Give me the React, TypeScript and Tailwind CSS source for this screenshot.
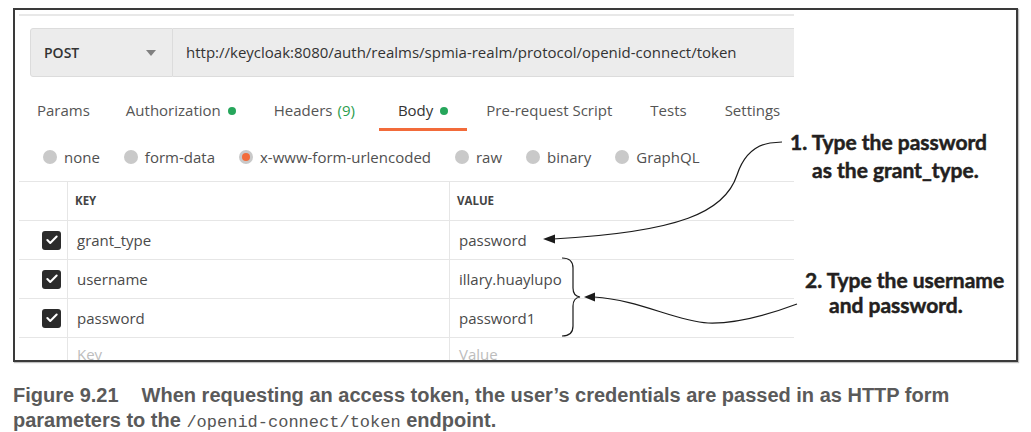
import { Check } from 'lucide-react';

const tabs = [
  { label: 'Params', pad: 'pl-[19px] pr-[17px]' },
  { label: 'Authorization', dot: true, pad: 'px-[19px]' },
  { label: 'Headers', count: '(9)', pad: 'pl-[19px] pr-[24px]' },
  { label: 'Body', dot: true, active: true, pad: 'px-[19px]' },
  { label: 'Pre-request Script', pad: 'px-[19px]' },
  { label: 'Tests', pad: 'px-[19px]' },
  { label: 'Settings', pad: 'px-[19px]' },
];

const bodyTypes = [
  { label: 'none' },
  { label: 'form-data' },
  { label: 'x-www-form-urlencoded', selected: true },
  { label: 'raw' },
  { label: 'binary' },
  { label: 'GraphQL' },
];

const params = [
  { key: 'grant_type', value: 'password' },
  { key: 'username', value: 'illary.huaylupo' },
  { key: 'password', value: 'password1' },
];

const Arrows = () => (
  <svg
    className="absolute left-0 top-0 pointer-events-none"
    width="1031"
    height="432"
    viewBox="0 0 1031 432"
  >
    <g fill="none" stroke="#1a1a1a" strokeWidth="1.2">
      <path d="M 782 142 L 770 143 C 752 146, 742 160, 737 175 C 725 212, 680 232, 553 239" />
      <path d="M 797 304 C 765 316, 735 324, 708 323 C 675 321, 640 300, 594 297" />
      <path d="M 562 258 Q 573 258 573 268 L 573 288 Q 573 296 580 297 Q 573 298 573 306 L 573 326 Q 573 336 562 336" />
    </g>
    <polygon points="543,239 555,234.5 555,243.5" fill="#1a1a1a" />
    <polygon points="584,297 595,292.5 595,301.5" fill="#1a1a1a" />
  </svg>
);

export default function App() {
  return (
    <div className="relative w-[1031px] h-[432px] bg-white overflow-hidden font-['Open_Sans',sans-serif]">
      <div className="pt-[8px] pl-[13px]">
        <div className="w-[1005px] h-[354px] border-2 border-[#3a3a3a] shadow-[1px_1px_1px_rgba(0,0,0,0.25)] flex overflow-hidden">
          {/* Postman request panel */}
          <div className="w-[779px] shrink-0 h-full overflow-hidden">
            <div className="mt-[4px] ml-[4px] h-[2px] bg-[#e8e8e8]" />

            {/* Method + URL */}
            <div className="mt-[12px] ml-[15px] h-[49px] flex">
              <div className="w-[143px] shrink-0 flex items-center justify-between pl-[13px] pr-[16px] bg-[#ececec] border border-[#dcdcdc] rounded-l-[3px]">
                <span className="text-[14px] font-semibold text-[#333]">POST</span>
                <span className="w-0 h-0 border-l-[5px] border-r-[5px] border-t-[6px] border-l-transparent border-r-transparent border-t-[#808080]" />
              </div>
              <div className="flex-1 flex items-center pl-[13px] bg-[#ececec] border-y border-[#dcdcdc] text-[15px] text-[#333] whitespace-nowrap">
                http://keycloak:8080/auth/realms/spmia-realm/protocol/openid-connect/token
              </div>
            </div>

            {/* Tabs */}
            <div className="mt-[16px] ml-[3px] flex">
              {tabs.map((t) => (
                <div
                  key={t.label}
                  className={`h-[38px] flex items-center border-b-[3px] text-[15px] whitespace-nowrap ${t.pad} ${
                    t.active ? 'border-[#f26b3a] text-[#333]' : 'border-transparent text-[#555]'
                  }`}
                >
                  {t.label}
                  {t.count && <span className="ml-[5px] text-[#2a9d4e]">{t.count}</span>}
                  {t.dot && <span className="ml-[7px] w-[8px] h-[8px] rounded-full bg-[#26a65b]" />}
                </div>
              ))}
            </div>

            {/* Body types */}
            <div className="mt-[9px] ml-[28px] h-[34px] flex items-center gap-[24px]">
              {bodyTypes.map((b) => (
                <div key={b.label} className="flex items-center gap-[7px] text-[15px] text-[#505050] whitespace-nowrap">
                  <span className="w-[14px] h-[14px] rounded-full bg-[#c9c9c9] flex items-center justify-center">
                    {b.selected && <span className="w-[8px] h-[8px] rounded-full bg-[#f26b3a]" />}
                  </span>
                  {b.label}
                </div>
              ))}
            </div>

            {/* Params table */}
            <div className="mt-[7px] ml-[4px] border-t border-[#e6e6e6]">
              <div className="h-[39px] flex border-b border-[#e6e6e6]">
                <div className="w-[49px] shrink-0 border-r border-[#e6e6e6]" />
                <div className="w-[382px] shrink-0 border-r border-[#e6e6e6] flex items-center pl-[7px] text-[11.5px] font-bold text-[#444]">
                  KEY
                </div>
                <div className="flex-1 flex items-center pl-[7px] text-[11.5px] font-bold text-[#444]">VALUE</div>
              </div>
              {params.map((p) => (
                <div key={p.key} className="h-[39px] flex border-b border-[#e6e6e6] text-[15px] text-[#4a4a4a]">
                  <div className="w-[49px] shrink-0 border-r border-[#e6e6e6] flex items-center justify-end pr-[6px]">
                    <span className="w-[19px] h-[19px] rounded-[3px] bg-[#2b2b2b] flex items-center justify-center">
                      <Check size={14} strokeWidth={3.5} color="#ffffff" />
                    </span>
                  </div>
                  <div className="w-[382px] shrink-0 border-r border-[#e6e6e6] flex items-center pl-[9px]">{p.key}</div>
                  <div className="flex-1 flex items-center pl-[9px]">{p.value}</div>
                </div>
              ))}
              <div className="h-[39px] flex text-[15px] leading-[20px] text-[#bdbdbd]">
                <div className="w-[49px] shrink-0 border-r border-[#e6e6e6]" />
                <div className="w-[382px] shrink-0 border-r border-[#e6e6e6] pt-[6px] pl-[9px]">Key</div>
                <div className="flex-1 pt-[6px] pl-[9px]">Value</div>
              </div>
            </div>
          </div>
          <div className="flex-1" />
        </div>
      </div>

      {/* Caption */}
      <div className="mt-[21px] ml-[13px] text-[20px] leading-[25px] font-bold text-[#5a5a5a] font-['Liberation_Sans',sans-serif] whitespace-nowrap">
        <p>
          Figure 9.21<span className="inline-block w-[23px]" />When requesting an access token, the user’s credentials are passed in as HTTP form
        </p>
        <p>
          parameters to the{' '}
          <span className="font-['Liberation_Mono',monospace] text-[17px] font-normal text-[#555]">/openid-connect/token</span>{' '}
          endpoint.
        </p>
      </div>

      <Arrows />

      {/* Callouts */}
      <div className="absolute left-[790px] top-[128px] text-[21px] leading-[28px] font-bold text-[#231f20] font-['Lato',sans-serif] [-webkit-text-stroke:0.5px_#231f20] whitespace-nowrap">
        <div>1. Type the password</div>
        <div className="pl-[22px]">as the grant_type.</div>
      </div>
      <div className="absolute left-[805px] top-[267px] text-[21px] leading-[25px] font-bold text-[#231f20] font-['Lato',sans-serif] [-webkit-text-stroke:0.5px_#231f20] whitespace-nowrap">
        <div>2. Type the username</div>
        <div className="pl-[24px]">and password.</div>
      </div>
    </div>
  );
}
